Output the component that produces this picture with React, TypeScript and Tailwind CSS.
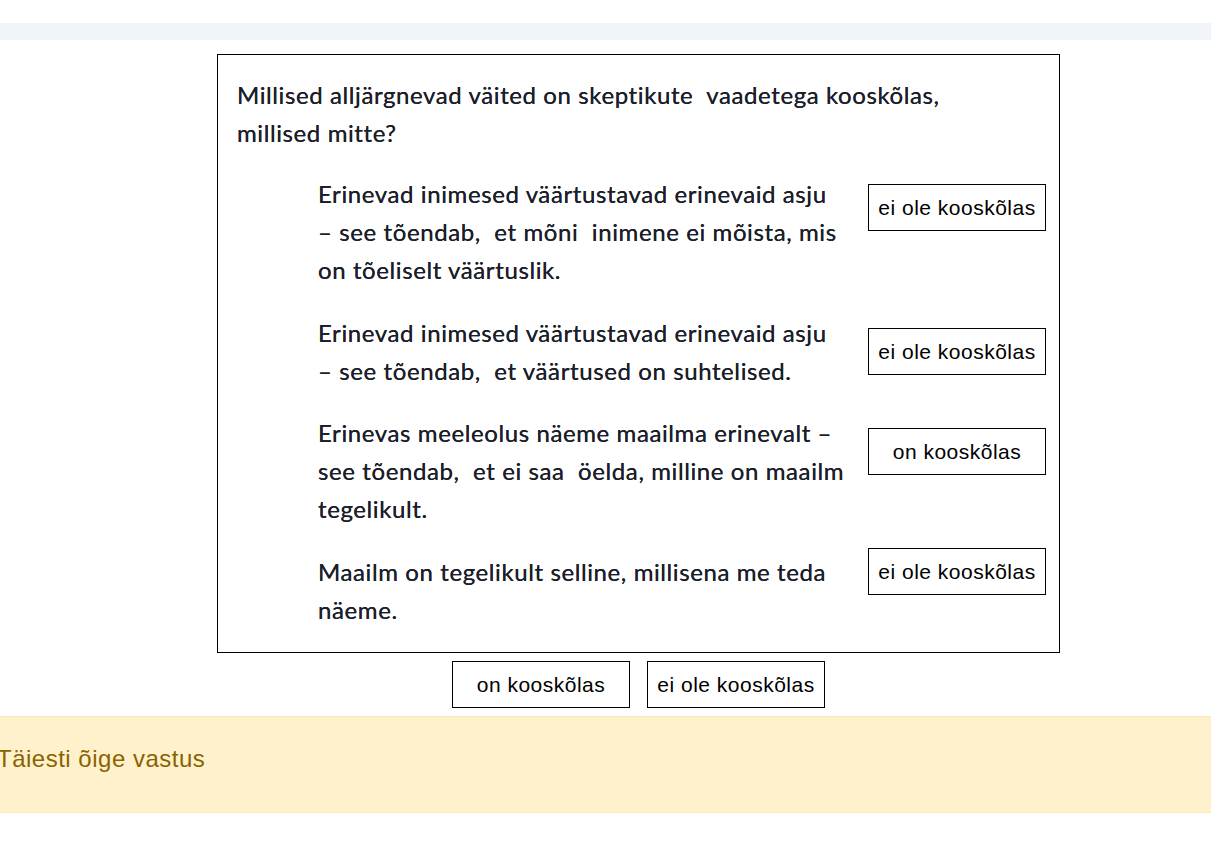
const boxFont = { fontFamily: "Lato, 'Open Sans', sans-serif" };

type Row = { lines: string[]; answer: string; rowTop: string; btnTop: string };

const rows: Row[] = [
  {
    lines: [
      "Erinevad inimesed väärtustavad erinevaid asju",
      "– see tõendab,  et mõni  inimene ei mõista, mis",
      "on tõeliselt väärtuslik.",
    ],
    answer: "ei ole kooskõlas",
    rowTop: "mt-[23px]",
    btnTop: "mt-[9px]",
  },
  {
    lines: ["Erinevad inimesed väärtustavad erinevaid asju", "– see tõendab,  et väärtused on suhtelised."],
    answer: "ei ole kooskõlas",
    rowTop: "mt-[25px]",
    btnTop: "mt-[14px]",
  },
  {
    lines: [
      "Erinevas meeleolus näeme maailma erinevalt –",
      "see tõendab,  et ei saa  öelda, milline on maailm",
      "tegelikult.",
    ],
    answer: "on kooskõlas",
    rowTop: "mt-[24px]",
    btnTop: "mt-[14px]",
  },
  {
    lines: ["Maailm on tegelikult selline, millisena me teda", "näeme."],
    answer: "ei ole kooskõlas",
    rowTop: "mt-[25px]",
    btnTop: "-mt-[5px]",
  },
];

function Choice({ label, className = "" }: { label: string; className?: string }) {
  return (
    <div
      className={`flex h-[47px] w-[178px] shrink-0 items-center justify-center border border-black bg-white text-[21px] tracking-[0.5px] text-black ${className}`}
      style={{ fontFamily: "'Liberation Sans', Arial, sans-serif" }}
    >
      {label}
    </div>
  );
}

export default function App() {
  return (
    <div className="min-h-screen bg-white pt-[23px]">
      <div className="h-[17px] bg-[#f1f5f9]" />

      <div className="flex flex-col items-center pl-[66px] pt-[14px]">
        <div
          className="w-[843px] border border-black bg-white pl-[19px] pt-[21px] pb-[23px] text-[#1c1f2a] [text-shadow:0_0_0.3px_#1c1f2a]"
          style={boxFont}
        >
          <p className="whitespace-pre text-[24px] leading-[38px] tracking-[0.6px]">
            {"Millised alljärgnevad väited on skeptikute  vaadetega kooskõlas,"}
            <br />
            millised mitte?
          </p>

          <div className="pl-[81px]">
            {rows.map((r, i) => (
              <div key={i} className={`flex items-start ${r.rowTop}`}>
                <p className="w-[550px] shrink-0 whitespace-pre text-[24px] leading-[38px] tracking-[0.6px]">
                  {r.lines.map((l, j) => (
                    <span key={j} className="block">
                      {l}
                    </span>
                  ))}
                </p>
                <Choice label={r.answer} className={`[text-shadow:none] ${r.btnTop}`} />
              </div>
            ))}
          </div>
        </div>

        <div className="mt-[8px] flex gap-[17px]">
          <Choice label="on kooskõlas" />
          <Choice label="ei ole kooskõlas" />
        </div>
      </div>

      <div
        className="mt-[8px] flex h-[97px] items-center border-y border-[#fde9b0] bg-[#fff1cc] -ml-[3px] pb-[12px] text-[24px] tracking-[0.5px] text-[#8a6300]"
        style={{ fontFamily: "'Liberation Sans', Arial, sans-serif" }}
      >
        Täiesti õige vastus
      </div>
    </div>
  );
}
